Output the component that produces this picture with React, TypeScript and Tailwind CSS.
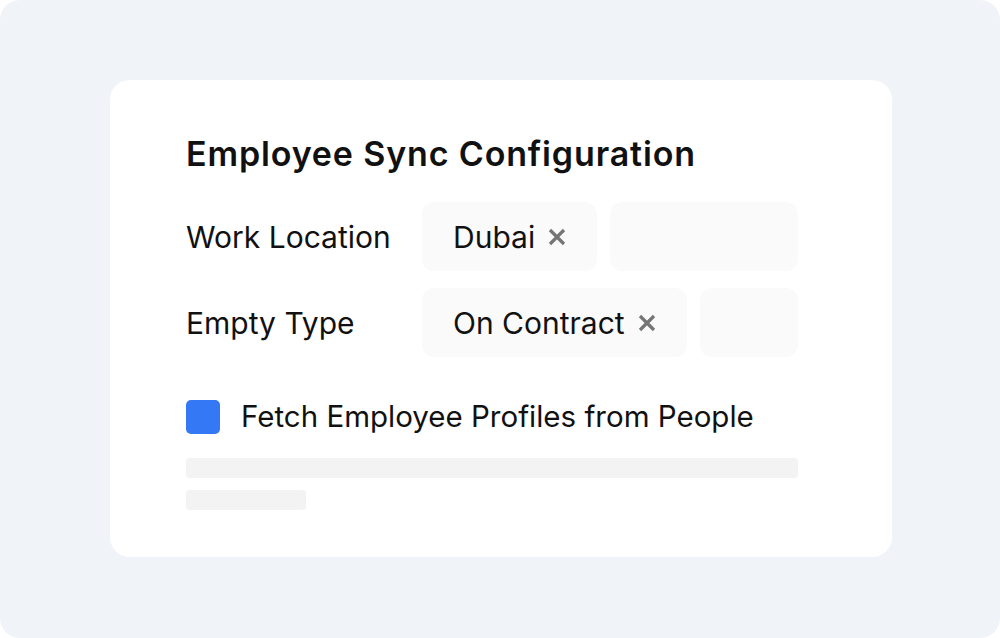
function Cross() {
  return (
    <svg width="18" height="18" viewBox="0 0 18 18" className="shrink-0">
      <path d="M2 2L16 16M16 2L2 16" stroke="#757575" strokeWidth="3.2" />
    </svg>
  );
}

function Chip({ label }: { label: string }) {
  return (
    <div className="flex h-[69px] items-center gap-[13px] rounded-xl bg-[#fafafa] px-[31px]">
      <span className="text-[30px] leading-none text-[#111]">{label}</span>
      <Cross />
    </div>
  );
}

function Row({ label, chip }: { label: string; chip: string }) {
  return (
    <div className="flex items-center">
      <div className="w-[236px] text-[30px] leading-none text-[#111]">{label}</div>
      <div className="flex flex-1 gap-[13px]">
        <Chip label={chip} />
        <div className="h-[69px] flex-1 rounded-xl bg-[#fafafa]" />
      </div>
    </div>
  );
}

export default function App() {
  return (
    <div
      className="flex h-[638px] w-[1000px] items-start justify-center rounded-[20px] bg-[#f0f4f8] pt-[80px]"
      style={{ fontFamily: 'Inter, "Noto Sans", sans-serif' }}
    >
      <div className="ml-[2px] h-[477px] w-[782px] rounded-[20px] bg-white pl-[76px] pr-[94px] pt-[54px]">
        <h1 className="h-[40px] text-[34px] font-semibold leading-[40px] tracking-[0.85px] text-[#111]">
          Employee Sync Configuration
        </h1>
        <div className="mt-[28px] flex flex-col gap-[17px]">
          <Row label="Work Location" chip="Dubai" />
          <Row label="Empty Type" chip="On Contract" />
        </div>
        <div className="mt-[43px] flex items-center gap-[21px]">
          <div className="h-[34px] w-[34px] rounded-[5px] bg-[#3478f6]" />
          <span className="text-[29.5px] leading-none text-[#111]">Fetch Employee Profiles from People</span>
        </div>
        <div className="mt-[24px] h-[20px] rounded-[4px] bg-[#f3f3f3]" />
        <div className="mt-[12px] h-[20px] w-[120px] rounded-[4px] bg-[#f3f3f3]" />
      </div>
    </div>
  );
}
